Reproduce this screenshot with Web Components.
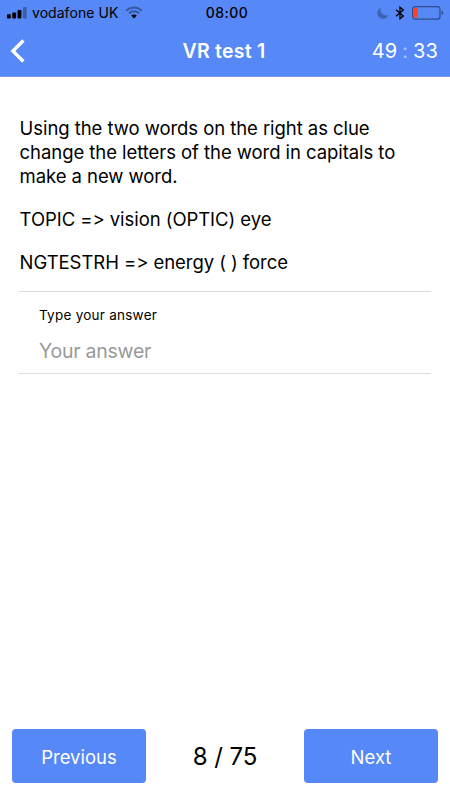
<!DOCTYPE html>
<html lang="en">
<head>
<meta charset="utf-8">
<meta name="viewport" content="width=device-width, initial-scale=1">
<title>VR test 1</title>
<style>
html, body {
	margin: 0;
	height: 100%;
}
body {
	--azul: #5688f7;
	--blanco: #ffffff;
	--linea: #dcdcdc;
	font-family: Inter, "Liberation Sans", sans-serif;
	color: #000;
	background: var(--blanco);
	overflow: hidden;
}
</style>
</head>
<body>
<test-page>
	<status-bar slot="top" carrier="vodafone UK" time="08:00"></status-bar>
	<nav-header slot="top" minutes="49" seconds="33">VR test 1</nav-header>
	<question-text>
		<p>Using the two words on the right as clue<br>change the letters of the word in capitals to<br>make a new word.</p>
		<p>TOPIC =&gt; vision (OPTIC) eye</p>
		<p>NGTESTRH =&gt; energy ( ) force</p>
	</question-text>
	<answer-field placeholder="Your answer">Type your answer</answer-field>
	<page-footer slot="bottom" current="8" total="75">
		<app-button slot="prev">Previous</app-button>
		<app-button slot="next">Next</app-button>
	</page-footer>
</test-page>

<script>
class TestPage extends HTMLElement {
	constructor() {
		super()
		this.attachShadow({mode:'open'})
	}
	connectedCallback() {
		this.shadowRoot.innerHTML = `
		<slot name="top"></slot>
		<main><slot></slot></main>
		<slot name="bottom"></slot>
		<style>
:host{
	display: flex;
	flex-direction: column;
	height: 800px;
	width: 450px;
}
main{
	flex: 1;
	padding: 39px 19px 0 19px;
}
		</style>`
	}
}

class StatusBar extends HTMLElement {
	constructor() {
		super()
		this.attachShadow({mode:'open'})
	}
	connectedCallback() {
		this.shadowRoot.innerHTML = `
		<div id="left">
			<svg width="20" height="12" viewBox="0 0 20 12">
				<rect x="0" y="7.2" width="3.8" height="4.3" rx=".8"/>
				<rect x="5.3" y="5.4" width="3.8" height="6.1" rx=".8"/>
				<rect x="10.6" y="3" width="3.8" height="8.5" rx=".8"/>
				<rect x="15.9" y="0" width="3.8" height="11.5" rx=".8" opacity=".3"/>
			</svg>
			<span id="carrier">${this.getAttribute('carrier')}</span>
			<svg id="wifi" width="18" height="13" viewBox="0 0 18 13">
				<g fill="none" stroke="#000" stroke-width="2" opacity=".35">
					<path d="M1.2 4.6C5.6.3 12.4.3 16.8 4.6"/>
					<path d="M3.9 7.4C6.8 4.6 11.2 4.6 14.1 7.4"/>
				</g>
				<path d="M6.2 9.5C7.9 8.1 10.1 8.1 11.8 9.5L9 12.4Z"/>
			</svg>
		</div>
		<span id="time">${this.getAttribute('time')}</span>
		<div id="right">
			<svg width="12" height="12" viewBox="0 0 12 12">
				<path d="M4 .5A5.8 5.8 0 1 0 11.5 7.9A5.6 5.6 0 0 1 4 .5Z" fill="#3d62b2"/>
			</svg>
			<svg id="bluetooth" width="10" height="14" viewBox="0 0 10 14">
				<path d="M1 3.7L8.3 10L5 12.8V1.2L8.3 4L1 10.3" fill="none" stroke="#000" stroke-width="1.3"/>
			</svg>
			<svg id="battery" width="32" height="14" viewBox="0 0 32 14">
				<rect x=".6" y=".6" width="27.4" height="12.6" rx="2.6" fill="none" stroke="#2f4d8c" stroke-width="1.2"/>
				<rect x="2" y="2.1" width="3.6" height="9.5" rx=".5" fill="#ff4020"/>
				<path d="M29.6 4.7Q31.2 5.2 31.2 6.9Q31.2 8.6 29.6 9.1Z" fill="#2f4d8c"/>
			</svg>
		</div>
		<style>
:host{
	display: grid;
	grid-template-columns: 1fr auto 1fr;
	align-items: center;
	height: 25px;
	background: var(--azul);
	font-size: 14px;
}
svg{
	display: block;
}
#left{
	display: flex;
	align-items: center;
	padding-left: 7px;
}
#carrier{
	margin-left: 5px;
	letter-spacing: .05px;
	white-space: nowrap;
}
#wifi{
	margin-left: 7px;
}
#time{
	font-weight: 500;
	letter-spacing: .5px;
	padding-left: 4px;
}
#right{
	display: flex;
	align-items: center;
	justify-content: flex-end;
	padding-right: 6px;
}
#bluetooth{
	margin: 0 7px 0 6px;
}
		</style>`
	}
}

class NavHeader extends HTMLElement {
	constructor() {
		super()
		this.attachShadow({mode:'open'})
	}
	connectedCallback() {
		this.shadowRoot.innerHTML = `
		<svg width="15" height="24" viewBox="0 0 15 24">
			<path d="M13.4 1.5L2.9 12L13.4 22.5" fill="none" stroke="#fff" stroke-width="3.4"/>
		</svg>
		<h1><slot></slot></h1>
		<div id="timer">${this.getAttribute('minutes')}<i>:</i>${this.getAttribute('seconds')}</div>
		<style>
:host{
	display: grid;
	grid-template-columns: 1fr auto 1fr;
	align-items: center;
	box-sizing: border-box;
	height: 52px;
	padding: 0 12px 0 10px;
	border-bottom: 1px solid #7c9de6;
	background: var(--azul);
	color: var(--blanco);
}
h1{
	margin: 0;
	font-size: 19.5px;
	font-weight: 600;
	letter-spacing: .25px;
}
#timer{
	justify-self: end;
	font-size: 20px;
	letter-spacing: .1px;
}
i{
	font-style: normal;
	opacity: .5;
	margin: 0 5px;
}
		</style>`
	}
}

class QuestionText extends HTMLElement {
	constructor() {
		super()
		this.attachShadow({mode:'open'})
	}
	connectedCallback() {
		this.shadowRoot.innerHTML = `
		<slot></slot>
		<style>
:host{
	display: block;
	padding-left: .6px;
	font-size: 18.5px;
	line-height: 24px;
	letter-spacing: -.06px;
	white-space: nowrap;
}
::slotted(p){
	margin: 0 0 19px 0;
}
		</style>`
	}
}

class AnswerField extends HTMLElement {
	constructor() {
		super()
		this.attachShadow({mode:'open'})
	}
	connectedCallback() {
		this.shadowRoot.innerHTML = `
		<label for="answer"><slot></slot></label>
		<input id="answer" type="text" placeholder="${this.getAttribute('placeholder')}">
		<style>
:host{
	display: flex;
	flex-direction: column;
	box-sizing: border-box;
	height: 83px;
	margin-top: -2px;
	padding: 14px 20px 0;
	border-top: 1px solid var(--linea);
	border-bottom: 1px solid var(--linea);
}
label{
	font-size: 13.5px;
	line-height: 18px;
	letter-spacing: .25px;
}
input{
	margin-top: 13px;
	padding: 0;
	border: none;
	outline: none;
	background: transparent;
	font-family: inherit;
	font-size: 19.5px;
	letter-spacing: -.25px;
	height: 28px;
}
input::placeholder{
	color: #999;
}
		</style>`
	}
}

class AppButton extends HTMLElement {
	constructor() {
		super()
		this.attachShadow({mode:'open'})
	}
	connectedCallback() {
		this.shadowRoot.innerHTML = `
		<button><slot></slot></button>
		<style>
:host{
	display: block;
}
button{
	display: block;
	width: 134px;
	height: 54px;
	padding: 1px 0 0;
	border: none;
	border-radius: 4px;
	background: var(--azul);
	color: var(--blanco);
	font-family: inherit;
	font-size: 18.5px;
}
		</style>`
	}
}

class PageFooter extends HTMLElement {
	constructor() {
		super()
		this.attachShadow({mode:'open'})
	}
	connectedCallback() {
		this.shadowRoot.innerHTML = `
		<slot name="prev"></slot>
		<span>${this.getAttribute('current')} / ${this.getAttribute('total')}</span>
		<slot name="next"></slot>
		<style>
:host{
	display: flex;
	justify-content: space-between;
	align-items: center;
	padding: 0 12px 17px;
}
span{
	font-size: 24px;
	letter-spacing: -.1px;
}
		</style>`
	}
}

customElements.define('test-page',TestPage);
customElements.define('status-bar',StatusBar);
customElements.define('nav-header',NavHeader);
customElements.define('question-text',QuestionText);
customElements.define('answer-field',AnswerField);
customElements.define('app-button',AppButton);
customElements.define('page-footer',PageFooter);
</script>
</body>
</html>
